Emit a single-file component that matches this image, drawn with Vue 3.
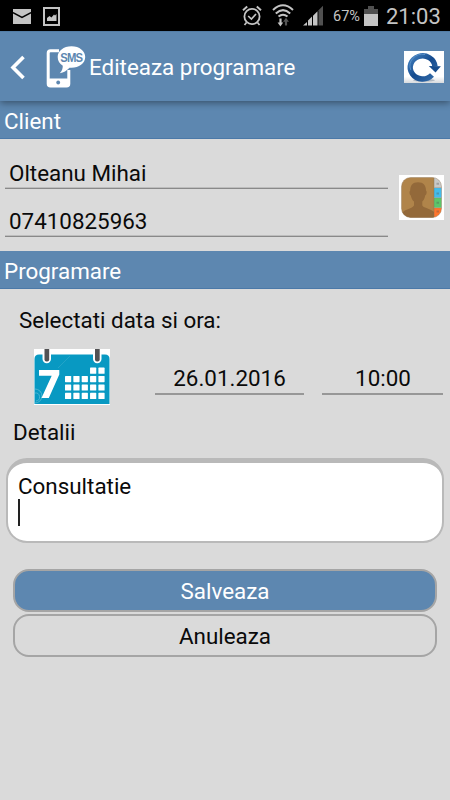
<script setup>
import { ref } from 'vue'

const name = ref('Olteanu Mihai')
const phone = ref('07410825963')
const date = ref('26.01.2016')
const time = ref('10:00')
const details = ref('Consultatie')

const cells = []
for (let row = 0; row < 4; row++) {
  for (let col = row === 0 ? 3 : 0; col < 5; col++) {
    cells.push({ x: 31 + col * 8.35, y: 18.6 + row * 8.4 })
  }
}
</script>

<template>
  <div class="screen">
    <div class="status">
      <svg class="mail" width="18" height="15" viewBox="0 0 18 15">
        <rect width="18" height="15" fill="#c4c4c4" />
        <path d="M0 3.6L9 8.5L18 3.6" fill="none" stroke="#000" stroke-width="1.5" />
      </svg>
      <svg class="photo" width="17" height="19" viewBox="0 0 17 19">
        <rect x="1" y="1" width="15" height="17" fill="none" stroke="#c4c4c4" stroke-width="2" />
        <path d="M4 14V11L6.5 9L8.5 10.5L11 7.5L12 8.5L13.5 7V14Z" fill="#c4c4c4" />
      </svg>
      <span class="spacer"></span>
      <svg class="alarm" width="20" height="22" viewBox="0 0 20 22" fill="none" stroke="#c4c4c4">
        <circle cx="10" cy="11.5" r="7.6" stroke-width="1.8" />
        <path d="M1 5.2L5.2 1.6M14.8 1.6L19 5.2" stroke-width="2" />
        <path d="M6.2 11L9.4 14L14 9M4.5 17.5L2.5 20M15.5 17.5L17.5 20" stroke-width="1.7" />
      </svg>
      <svg class="wifi" width="22" height="24" viewBox="0 0 22 24" fill="none" stroke="#c4c4c4" stroke-width="2">
        <path d="M1 6Q11 -3.4 21 6M3.8 9.4Q11 2.8 18.2 9.4M6.5 12.6Q11 8.8 15.5 12.6" />
        <path d="M8.5 14.5V20" stroke-width="2.2" />
        <path d="M5.6 18.5H11.2L8.4 22.5Z" fill="#c4c4c4" stroke="none" />
        <path d="M14 16V21.5" stroke="#555" stroke-width="2.2" />
        <path d="M11 17.8L14 13.8L17 17.8Z" fill="#555" stroke="none" />
      </svg>
      <svg class="signal" width="21" height="21" viewBox="0 0 21 21">
        <path d="M0 20.5L4 17V20.5ZM5 20.5V15.5L9 11.5V20.5ZM10 20.5V10.7L14.5 6.2V20.5Z" fill="#c4c4c4" />
        <path d="M15.5 20.5V5.2L20 .7V20.5Z" fill="#505050" />
      </svg>
      <span class="percent">67%</span>
      <svg class="battery" width="14" height="20" viewBox="0 0 14 20">
        <path d="M4 0H10V3H14V8H0V3H4Z" fill="#505050" />
        <rect y="8" width="14" height="12" fill="#c4c4c4" />
      </svg>
      <span class="clock">21:03</span>
    </div>

    <header class="bar">
      <svg class="back" width="16" height="25" viewBox="0 0 16 25">
        <path d="M14.5 2L4 12.5L14.5 23" fill="none" stroke="#fff" stroke-width="3.6" />
      </svg>
      <svg class="logo" width="40" height="42" viewBox="0 0 40 42">
        <path d="M13 4.7H4.5Q2.2 4.7 2.2 7V37.7Q2.2 40 4.5 40H20.5Q22.8 40 22.8 37.7V24" fill="none" stroke="#fff" stroke-width="3" />
        <rect x="2" y="32.5" width="21" height="8" rx="1.5" fill="#fff" />
        <circle cx="12.2" cy="36.5" r="1.9" fill="#5d87b0" />
        <path d="M25.5 .2C33.5 .2 39.2 5 39.2 11C39.2 17.5 32.8 21.8 25.5 21.8L23.5 21.7C20.5 24.8 17.7 26.5 13.8 27.2C16 24.8 16.8 22.5 16.8 19.7C13.5 17.7 11.7 14.7 11.7 11C11.7 5 17.5 .2 25.5 .2Z" fill="#fff" />
        <text x="14.3" y="13" transform="scale(1 1.2)" class="sms">SMS</text>
      </svg>
      <h1>Editeaza programare</h1>
      <svg class="refresh" width="40" height="32" viewBox="0 0 40 32">
        <defs>
          <linearGradient id="ring" x1="0" y1="0" x2="1" y2="1">
            <stop offset="0" stop-color="#4380bf" />
            <stop offset=".5" stop-color="#154b8e" />
            <stop offset="1" stop-color="#326ba9" />
          </linearGradient>
          <linearGradient id="floor" x1="0" y1="0" x2="0" y2="1">
            <stop offset=".8" stop-color="#fff" />
            <stop offset="1" stop-color="#d7dadd" />
          </linearGradient>
        </defs>
        <rect width="40" height="32" fill="url(#floor)" />
        <ellipse cx="20" cy="29.2" rx="11" ry="1.5" fill="#8c98a5" opacity=".6" />
        <path d="M28 24A12.4 11.6 0 1 1 31 15.5" fill="none" stroke="url(#ring)" stroke-width="5.4" />
        <path d="M24.8 15L36.9 15.2L31.5 21.5Z" fill="#164c8d" />
        <path d="M6.8 19A12.4 11.6 0 0 1 21 3.5" fill="none" stroke="#5990c8" stroke-width="1" />
      </svg>
    </header>

    <h2 class="band first">Client</h2>
    <section class="client">
      <div class="fields">
        <div class="field">{{ name }}</div>
        <div class="field">{{ phone }}</div>
      </div>
      <svg class="contact" width="45" height="45" viewBox="0 0 45 45">
        <defs>
          <clipPath id="book"><rect x="2.5" y="2.5" width="40" height="40" rx="9" /></clipPath>
        </defs>
        <rect width="45" height="45" fill="#fff" />
        <g clip-path="url(#book)">
          <rect x="2" y="2" width="33" height="41" fill="#b0844a" />
          <path d="M19 7.2C24.5 7.2 27 10.5 27 15.5C28.2 16.5 27.8 19.5 26.2 20.5C25.7 23.5 24.6 25.2 23.3 26.6V30.5C24.8 33.2 32 33.7 35 37V43H3V38C6 34 13.3 33.5 15 30.5V26.6C13.3 25.2 12.3 23 11.8 20.5C10.3 19.5 10 16.5 11.2 15.5C11.2 10.5 13.5 7.2 19 7.2Z" fill="#93693a" />
          <rect x="35" y="2" width="8" height="10.7" fill="#c8c8c6" />
          <rect x="35" y="13" width="8" height="9.7" fill="#43bcec" />
          <rect x="35" y="23" width="8" height="9.7" fill="#5cc66c" />
          <rect x="35" y="33" width="8" height="10" fill="#ff772d" />
          <path d="M35 2V43M35 12.6H43M35 22.7H43M35 32.7H43" stroke="#80705a" stroke-width=".7" opacity=".6" />
          <path d="M37.5 8.8H40M37.5 18.5H40M37.5 27.8H40M37.5 36.5H40" stroke="#555" stroke-width="2" opacity=".35" />
        </g>
        <rect x="2.5" y="2.5" width="40" height="40" rx="9" fill="none" stroke="#8d7453" stroke-width=".7" opacity=".6" />
      </svg>
    </section>

    <h2 class="band">Programare</h2>
    <section class="schedule">
      <p class="prompt">Selectati data si ora:</p>
      <div class="when">
        <svg class="calendar" width="76" height="56" viewBox="0 0 76 56">
          <rect width="76" height="56" fill="#fff" />
          <path d="M.5 55V10Q.5 5.5 5 5.5H71Q75.5 5.5 75.5 10V55Z" fill="#0899c2" />
          <path d="M24 19L36 7" fill="none" stroke="#49b5d2" stroke-width=".7" opacity=".6" />
          <path d="M1 40A7 7 0 0 1 1 54M1 44A4 4 0 0 1 2 52" fill="none" stroke="#49b5d2" stroke-width="1" />
          <rect x="8.5" y="-4" width="8.5" height="18.2" rx="4.2" fill="#fff" />
          <rect x="59" y="-4" width="8.5" height="18.2" rx="4.2" fill="#fff" />
          <rect x="10.5" y="-2" width="4.7" height="14.4" rx="2" fill="#525254" />
          <rect x="61" y="-2" width="4.7" height="14.4" rx="2" fill="#525254" />
          <path d="M5 21H25.3V25.5L14.8 49H7.5L17.7 26.8H5Z" fill="#fff" />
          <rect v-for="(cell, i) in cells" :key="i" :x="cell.x" :y="cell.y" width="6.2" height="6.2" rx=".6" fill="#fff" />
        </svg>
        <div class="value date">{{ date }}</div>
        <div class="value time">{{ time }}</div>
      </div>
      <p class="label">Detalii</p>
      <div class="details">
        <span>{{ details }}</span>
        <i class="caret"></i>
      </div>
    </section>

    <div class="actions">
      <button class="save">Salveaza</button>
      <button class="cancel">Anuleaza</button>
    </div>
  </div>
</template>

<style>
body {
  margin: 0;
  background: #dadada;
}
</style>

<style scoped>
.screen {
  width: 450px;
  height: 800px;
  overflow: hidden;
  background: #dadada;
  color: #0a0a0a;
  font: 22.4px/26px Roboto, sans-serif;
}
.screen * {
  box-sizing: border-box;
}
svg {
  display: block;
  flex: none;
}
.status {
  display: flex;
  align-items: flex-start;
  height: 31px;
  padding: 0 10px 0 13px;
  background: #000;
  color: #c4c4c4;
}
.mail { margin-top: 9px; }
.photo { margin: 7px 0 0 12px; }
.spacer { flex: 1; }
.alarm { margin: 5px 10px 0 0; }
.wifi { margin: 4px 9px 0 0; }
.signal { margin: 5px 9px 0 0; }
.percent {
  width: 31px;
  margin-top: 8px;
  font-size: 14.5px;
  line-height: 18px;
}
.battery { margin: 6px 8px 0 0; }
.clock {
  width: 54px;
  margin-top: 4px;
  font-size: 22px;
  line-height: 26px;
  white-space: nowrap;
}
.bar {
  position: relative;
  display: flex;
  align-items: center;
  height: 70px;
  padding: 1px 6px 0 9px;
  background: #5d87b0;
  border-top: 1px solid #527da6;
  color: #fff;
  box-shadow: 0 2px 7px rgba(0, 0, 0, 0.4);
}
.logo {
  margin-left: 21px;
  overflow: visible;
}
.sms {
  font: bold 11.3px "Liberation Sans", sans-serif;
  letter-spacing: -0.8px;
  fill: #5d87b0;
}
h1,
h2,
p {
  margin: 0;
  font-size: 22.4px;
  font-weight: 400;
}
h1 {
  flex: 1;
  padding-left: 3px;
  white-space: nowrap;
}
.band {
  height: 38px;
  padding-left: 4px;
  line-height: 40px;
  background: #5d87b0;
  border-bottom: 1px solid #4b79a8;
  color: #fff;
}
.client {
  display: flex;
  height: 112px;
  padding: 14px 6px 0 5px;
}
.fields {
  width: 383px;
}
.field {
  height: 48px;
  padding: 19px 4px 0;
  border-bottom: 1px solid #898989;
  box-shadow: inset 0 -1px #bdbdbd;
}
.field:first-child {
  height: 36px;
  padding-top: 7px;
}
.contact {
  margin: 22px 0 0 11px;
}
.schedule {
  padding: 18px 6px 0;
}
.prompt {
  padding-left: 13px;
}
.when {
  display: flex;
  height: 61px;
  margin-top: 16px;
  padding-left: 28px;
}
.value {
  height: 46px;
  padding: 16px 0 0;
  border-bottom: 2px solid #979797;
  text-align: center;
}
.date {
  width: 149px;
  margin-left: 45px;
}
.time {
  width: 121px;
  margin-left: 18px;
  padding-left: 1px;
}
.label {
  margin-top: 9px;
  padding-left: 7px;
}
.details {
  height: 85px;
  margin-top: 13px;
  padding: 10px;
  background: #fff;
  border: 2px solid #b9b9b9;
  border-top-width: 5px;
  border-radius: 21px;
}
.details span {
  display: block;
}
.caret {
  display: block;
  width: 2px;
  height: 27px;
  background: #222;
}
.actions {
  display: grid;
  gap: 2px;
  padding: 26px 13px 0;
}
button {
  height: 43px;
  padding: 1px 0 0;
  border: 2px solid #a5a5a5;
  border-radius: 16px;
  font: 22.4px/26px Roboto, sans-serif;
  color: #0a0a0a;
  background: transparent;
}
.save {
  background: #5d87b0;
  color: #fff;
}
</style>
